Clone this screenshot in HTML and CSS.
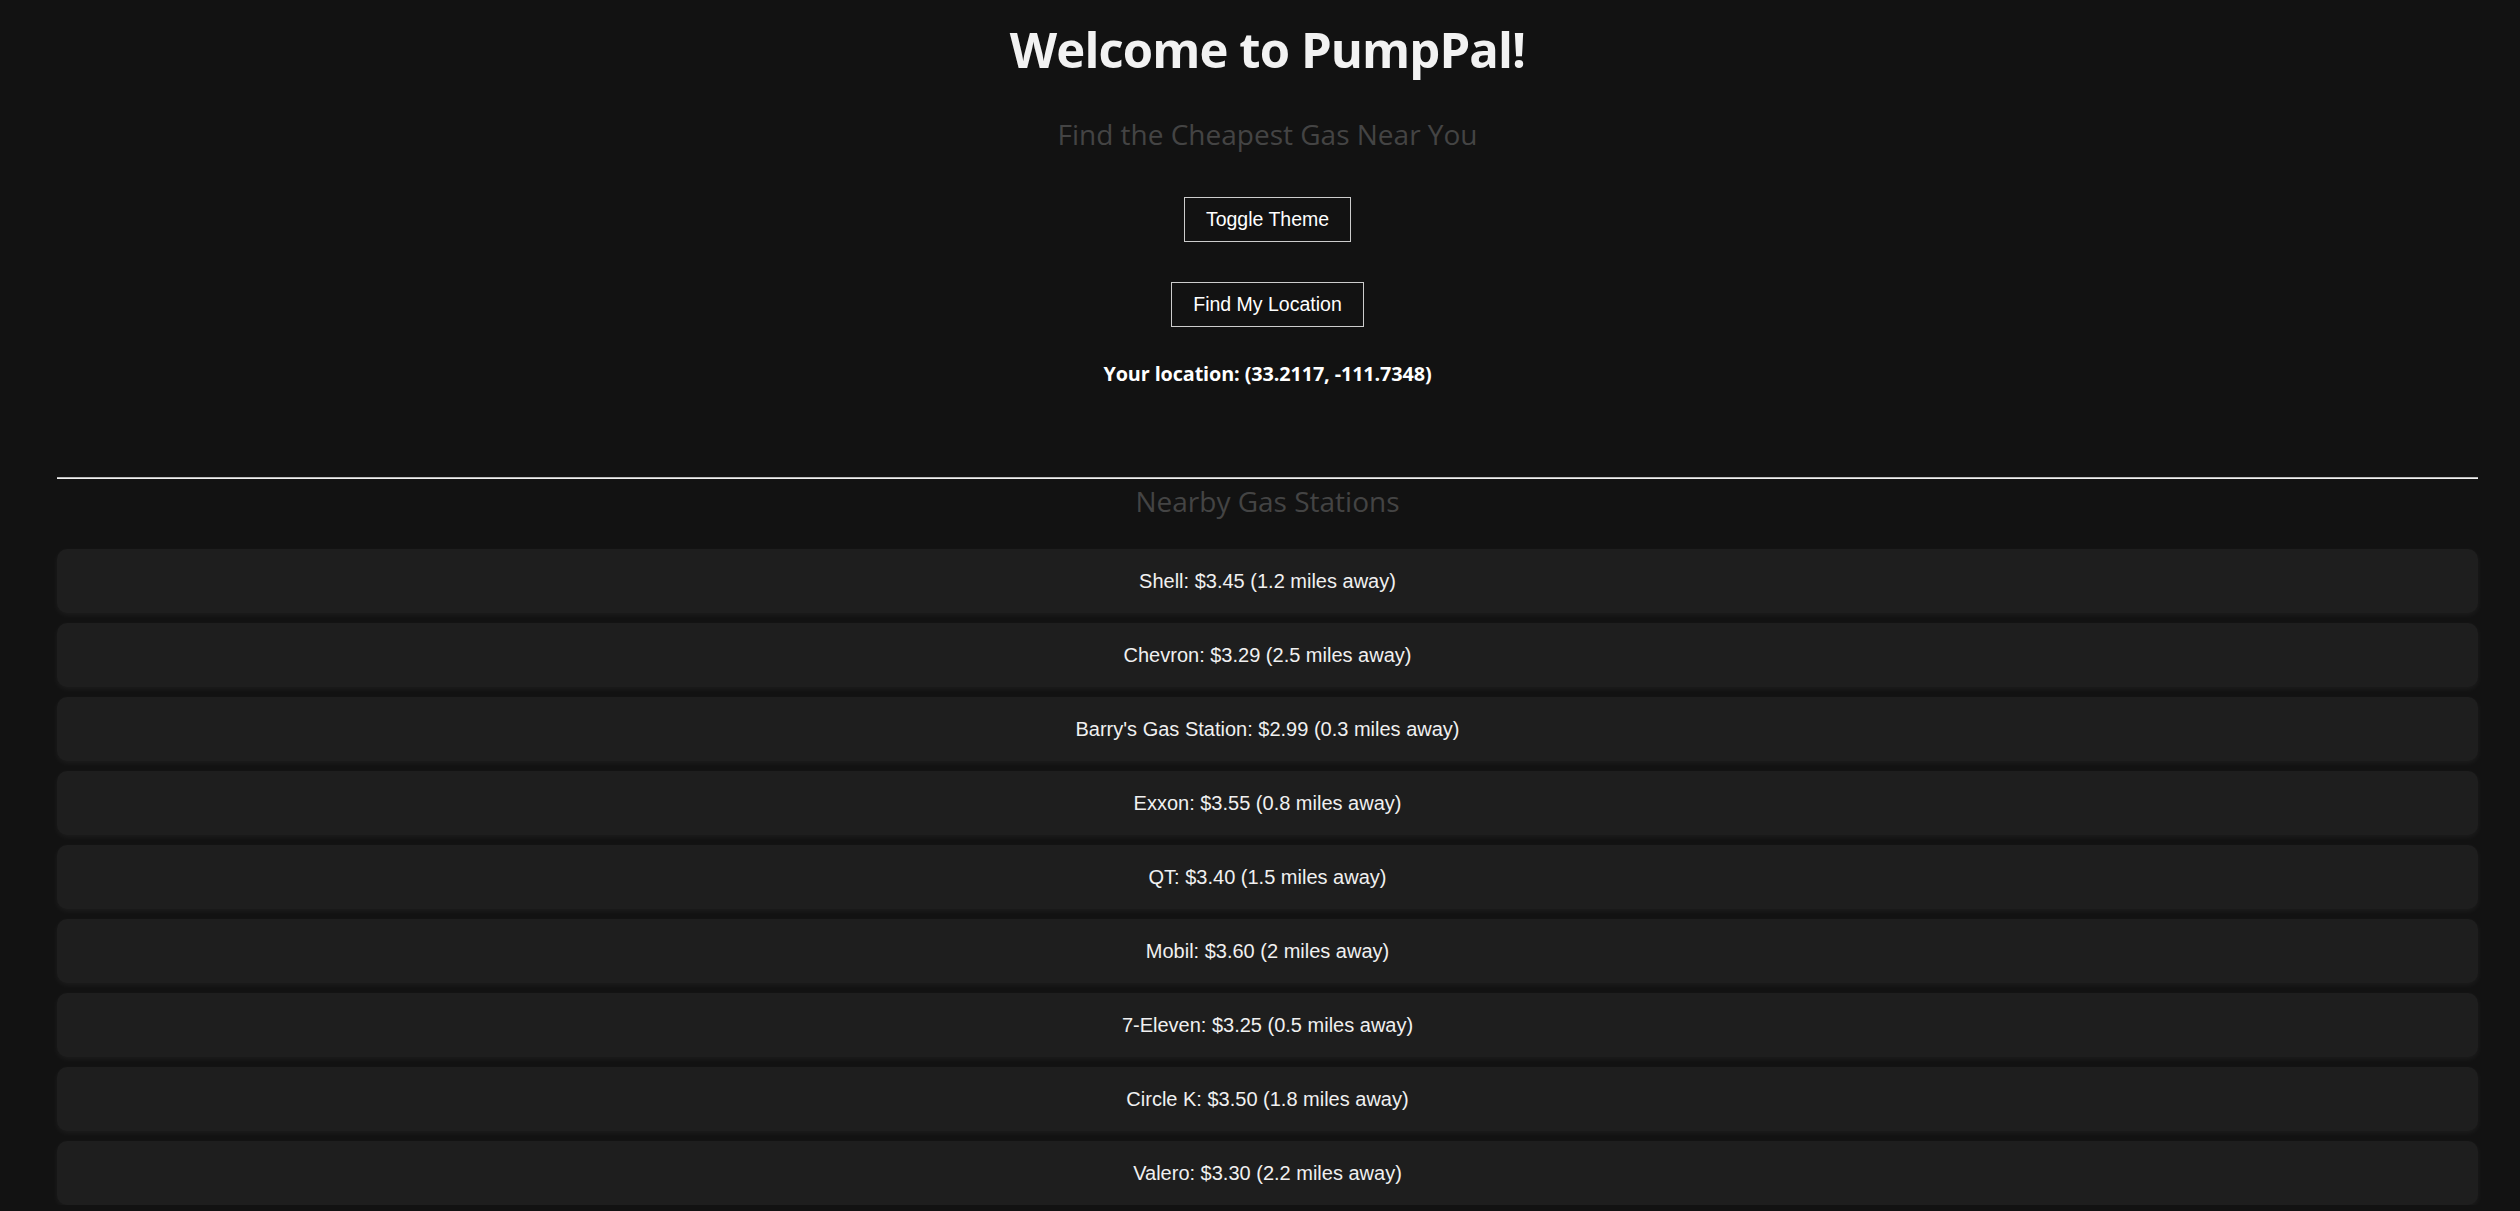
FILE: index.html
```html
<!DOCTYPE html>
<html lang="en">
<head>
<meta charset="utf-8">
<title>PumpPal</title>
<link rel="stylesheet" href="styles.css">
</head>
<body>
<div class="app">
  <header class="hero">
    <h1 class="title">Welcome to PumpPal!</h1>
    <h2 class="subtitle">Find the Cheapest Gas Near You</h2>
    <button class="btn btn-theme">Toggle Theme</button>
    <button class="btn btn-locate">Find My Location</button>
    <p class="location">Your location: (33.2117, -111.7348)</p>
  </header>
  <hr class="divider">
  <section class="stations">
    <h2 class="section-title">Nearby Gas Stations</h2>
    <ul class="station-list">
      <li class="station">Shell: $3.45 (1.2 miles away)</li>
      <li class="station">Chevron: $3.29 (2.5 miles away)</li>
      <li class="station">Barry's Gas Station: $2.99 (0.3 miles away)</li>
      <li class="station">Exxon: $3.55 (0.8 miles away)</li>
      <li class="station">QT: $3.40 (1.5 miles away)</li>
      <li class="station">Mobil: $3.60 (2 miles away)</li>
      <li class="station">7-Eleven: $3.25 (0.5 miles away)</li>
      <li class="station">Circle K: $3.50 (1.8 miles away)</li>
      <li class="station">Valero: $3.30 (2.2 miles away)</li>
    </ul>
  </section>
</div>
</body>
</html>
```
FILE: styles.css
```css
html, body {
  margin: 0;
  padding: 0;
  background: #121212;
}
body {
  font-family: "Open Sans", "Noto Sans", sans-serif;
  color: #f2f2f2;
}
.app {
  padding: 0 42px 0 57px;
}
.hero {
  display: flex;
  flex-direction: column;
  align-items: center;
  text-align: center;
}
.title {
  margin: 19px 0 0;
  font-size: 49px;
  line-height: 60px;
  font-weight: 700;
  color: #f2f2f2;
  letter-spacing: -0.9px;
}
.subtitle {
  margin: 38px 0 0;
  font-size: 28px;
  line-height: 34px;
  font-weight: 400;
  color: #444444;
}
.btn {
  font-family: "Liberation Sans", Arial, sans-serif;
  font-size: 19.5px;
  line-height: 23px;
  color: #ffffff;
  background: transparent;
  border: 1px solid #cccccc;
  border-radius: 0;
  padding: 10px 21px;
  margin: 0;
  cursor: pointer;
}
.btn-theme {
  margin-top: 46px;
}
.btn-locate {
  margin-top: 40px;
}
.location {
  margin: 33px 0 0;
  font-size: 19.8px;
  line-height: 27px;
  font-weight: 700;
  color: #ffffff;
  letter-spacing: -0.1px;
}
.divider {
  margin: 90px 0 0;
  height: 0;
  border: 0;
  border-top: 1px solid #bbbbbb;
  border-bottom: 1px solid #f0f0f0;
}
.section-title {
  margin: 5px 0 0;
  text-align: center;
  font-size: 28px;
  line-height: 34px;
  font-weight: 400;
  color: #444444;
}
.station-list {
  list-style: none;
  margin: 31px 0 0;
  padding: 0;
  display: flex;
  flex-direction: column;
  gap: 10px;
}
.station {
  height: 64px;
  line-height: 64px;
  text-align: center;
  font-family: "Liberation Sans", Arial, sans-serif;
  font-size: 20px;
  color: #f0f0f0;
  background: #1e1e1e;
  border-radius: 10px;
  box-shadow: 0 2px 6px rgba(255, 255, 255, 0.05);
}
```
